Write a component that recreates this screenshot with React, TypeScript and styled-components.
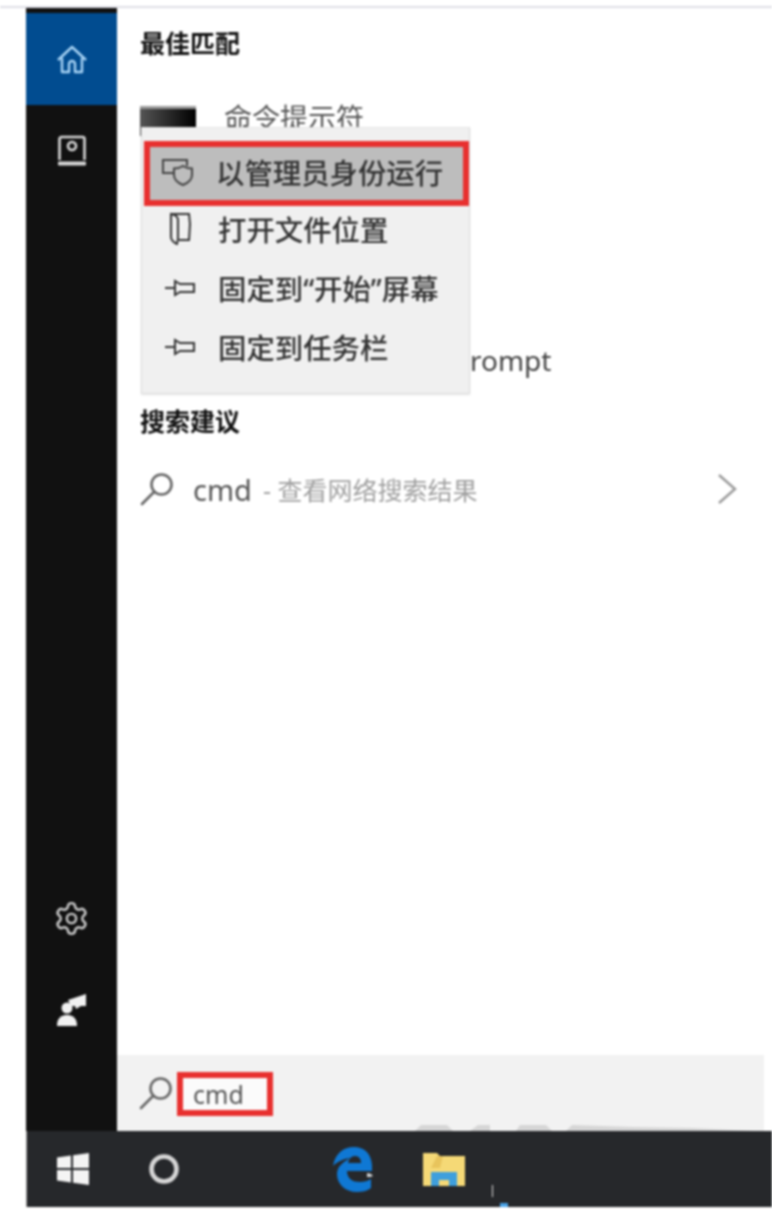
import { FC } from "react";
import styled, { createGlobalStyle } from "styled-components";
import { Settings } from "lucide-react";

const GlobalStyle = createGlobalStyle`
  html, body {
    margin: 0;
    background: #fff;
  }
  body {
    width: 772px;
    height: 1211px;
    overflow: hidden;
    font-family: "Noto Sans", "Noto Sans CJK SC", sans-serif;
  }
`;

const menuItems = [
  { label: "以管理员身份运行", icon: "admin", active: true },
  { label: "打开文件位置", icon: "file", active: false },
  { label: "固定到“开始”屏幕", icon: "pin", active: false },
  { label: "固定到任务栏", icon: "pin", active: false },
];

const SearchGlyph: FC<{ size: number }> = ({ size }) => (
  <svg width={size} height={size} viewBox="0 0 34 34" fill="none" stroke="#666" strokeWidth="2.6">
    <circle cx="21.5" cy="12.5" r="10" />
    <path d="M14 20 2 32" strokeLinecap="round" />
  </svg>
);

const MenuIcon: FC<{ kind: string }> = ({ kind }) => {
  if (kind === "admin") {
    return (
      <svg width="34" height="30" viewBox="0 0 34 30" fill="none" stroke="#444" strokeWidth="2">
        <path d="M13 16H2V3h24v6" />
        <path d="M22 9c3 2 6 2.500 9 2.500V18c0 5-4 8-9 10-5-2-9-5-9-10v-6.500c3 0 6-.5 9-2.500Z" fill="#bdbdbd" />
      </svg>
    );
  }
  if (kind === "file") {
    return (
      <svg width="24" height="33" viewBox="0 0 24 33" fill="none" stroke="#333" strokeWidth="2">
        <path d="M3 2h18l1 10-1 16H11" />
        <path d="M3 2c5 1 7 3 7 6v19l-1 5c-4-2-6-4-6-7Z" />
      </svg>
    );
  }
  return (
    <svg width="32" height="18" viewBox="0 0 32 18" fill="none" stroke="#333" strokeWidth="2">
      <path d="M1 9h10" />
      <path d="M11 2v14l5-3h14V5H16Z" />
    </svg>
  );
};

export default function App() {
  return (
    <>
      <GlobalStyle />
      <Screen>
        <TopRule />
        <StartWindow>
          <Sidebar>
            <div>
              <HomeTab>
                <svg width="32" height="32" viewBox="0 0 32 32" fill="none" stroke="#a9d4f5" strokeWidth="2.4" strokeLinejoin="round">
                  <path d="M2 16 16 3l14 13" />
                  <path d="M6 14v14h7v-8a3 3 0 0 1 6 0v8h7V14" />
                </svg>
              </HomeTab>
              <SideButton>
                <svg width="30" height="32" viewBox="0 0 30 32" fill="none" stroke="#d8d8d8" strokeWidth="2.6">
                  <path d="M2.500 25V4a2 2 0 0 1 2-2h21a2 2 0 0 1 2 2v21" />
                  <circle cx="15" cy="11" r="4" />
                  <path d="M1.500 27h27v3h-27Z" fill="#d8d8d8" strokeWidth="1" />
                </svg>
              </SideButton>
            </div>
            <div>
              <SideButton>
                <Settings size={37} color="#c9c9c9" strokeWidth={1.6} />
              </SideButton>
              <SideButton>
                <svg width="30" height="34" viewBox="0 0 30 34" fill="#f2f2f2">
                  <path d="M11 7 29 1v12h-5l-5 3-1-3h-4Z" />
                  <circle cx="10" cy="15" r="5.500" />
                  <path d="M0 33c0-7 3-11 10-11s10 4 10 11Z" />
                </svg>
              </SideButton>
            </div>
          </Sidebar>
          <Panel>
            <Results>
              <SectionTitle>最佳匹配</SectionTitle>
              <AppRow>
                <AppThumb />
                <AppName>命令提示符</AppName>
              </AppRow>
              <CutoffLabel>rompt</CutoffLabel>
              <SectionTitle $top={26}>搜索建议</SectionTitle>
              <SuggestionRow>
                <SearchGlyph size={34} />
                <SuggestionTerm>cmd</SuggestionTerm>
                <SuggestionHint>- 查看网络搜索结果</SuggestionHint>
                <Chevron width="20" height="32" viewBox="0 0 20 32" fill="none" stroke="#999" strokeWidth="2.4">
                  <path d="M2 2l16 14L2 30" />
                </Chevron>
              </SuggestionRow>
              <ContextMenu>
                {menuItems.map((item) => (
                  <MenuRow key={item.label} $active={item.active}>
                    <MenuIconSlot>
                      <MenuIcon kind={item.icon} />
                    </MenuIconSlot>
                    <MenuLabel>{item.label}</MenuLabel>
                  </MenuRow>
                ))}
              </ContextMenu>
            </Results>
            <SearchBar>
              <SearchGlyph size={34} />
              <SearchInput>cmd</SearchInput>
              <Smear width="349" height="11" viewBox="0 0 349 11" fill="#d6d6d6">
                <path d="M0 11 6 5h26l6 6Zm55 0 8-6h12v6Zm46 0 4-6h26l6 6Zm50 0 6-6 60 2 60 1 62 3Z" />
              </Smear>
            </SearchBar>
          </Panel>
        </StartWindow>
        <Taskbar>
          <TaskSlot>
            <svg width="32" height="34" viewBox="0 0 32 34" fill="#f4f4f4">
              <path d="M0 5.500 14 3.500v12.500H0ZM16 3.200 32 1v15H16ZM0 18h14v12.500L0 28.500ZM16 18h16v15l-16-2.200Z" />
            </svg>
          </TaskSlot>
          <TaskSlot>
            <svg width="32" height="32" viewBox="0 0 32 32" fill="none" stroke="#d6d6d6" strokeWidth="4.6">
              <circle cx="16" cy="16" r="12.500" />
            </svg>
          </TaskSlot>
          <TaskSlot $gap={98}>
            <svg width="42" height="46" viewBox="0 0 42 46" fill="none">
              <path d="M1 20C3 8 11 1 22 1c10 0 17 6 18 18v6H15c0 8 6 11 13 11 4 0 8-1 11-3v9c-4 3-9 4-14 4C13 46 5 38 5 28c0-3 1-5 2-7 3-4 7-7 12-9-9 1-14 4-18 8Z" fill="#0f78d4" />
              <path d="M16 17h13c0-4-2-7-6-7s-6 3-7 7Z" fill="#26282b" />
              <path d="M35 27c2 0 5 1 6 3-2 1-4 1-6 1Z" fill="#cfd3d6" />
            </svg>
          </TaskSlot>
          <TaskSlot>
            <svg width="42" height="34" viewBox="0 0 42 34">
              <path d="M0 1h14l3 3h25v30H0Z" fill="#f5d976" />
              <path d="M14 4h6l-3 12H8Z" fill="#e8c45c" />
              <path d="M8 20h26v14H8Z" fill="#3f9fdc" />
              <path d="M16 28h10v6H16Z" fill="#f5d976" />
            </svg>
          </TaskSlot>
          <TaskTick />
          <TaskArrow />
        </Taskbar>
      </Screen>
    </>
  );
}

const Screen = styled.div`
  width: 772px;
  height: 1211px;
  padding-top: 6px;
  box-sizing: border-box;
  background: #fff;
  filter: blur(0.9px);
`;
const TopRule = styled.div`
  height: 2px;
  background: #dfdfe6;
`;
const StartWindow = styled.div`
  display: grid;
  grid-template-columns: 91px 647px;
  height: 1123px;
  margin-left: 26px;
`;
const Sidebar = styled.div`
  display: flex;
  flex-direction: column;
  justify-content: space-between;
  padding: 5px 0 75px;
  background: #111;
`;
const HomeTab = styled.div`
  display: flex;
  align-items: center;
  justify-content: center;
  height: 92px;
  padding-top: 2px;
  box-sizing: border-box;
  background: #014c90;
`;
const SideButton = styled.div`
  display: flex;
  align-items: center;
  justify-content: center;
  height: 92px;
`;
const Panel = styled.div`
  display: flex;
  flex-direction: column;
  background: #fff;
`;
const Results = styled.div`
  position: relative;
  flex: 1;
  padding: 20px 0 0 23px;
`;
const SectionTitle = styled.div<{ $top?: number }>`
  margin-top: ${(p) => p.$top ?? 0}px;
  font-size: 25px;
  line-height: 30px;
  font-weight: 700;
  color: #111;
`;
const AppRow = styled.div`
  display: flex;
  align-items: flex-start;
  gap: 28px;
  height: 60px;
  margin-top: 40px;
`;
const AppThumb = styled.div`
  width: 56px;
  height: 30px;
  margin-top: 8px;
  border-top: 3px solid #999;
  box-sizing: border-box;
  background: linear-gradient(90deg, #555, #000);
`;
const AppName = styled.div`
  font-size: 28px;
  line-height: 40px;
  color: #555;
`;
const CutoffLabel = styled.div`
  margin: 182px 0 0 330px;
  font-size: 28px;
  line-height: 40px;
  color: #444;
`;
const SuggestionRow = styled.div`
  display: flex;
  align-items: center;
  height: 60px;
  margin-top: 23px;
`;
const SuggestionTerm = styled.div`
  margin-left: 19px;
  font-size: 29px;
  color: #555;
`;
const SuggestionHint = styled.div`
  margin-left: 11px;
  font-size: 25px;
  color: #a0a0a0;
`;
const Chevron = styled.svg`
  margin-left: auto;
  margin-right: 27px;
`;
const ContextMenu = styled.div`
  position: absolute;
  top: 119px;
  left: 24px;
  width: 329px;
  height: 267px;
  box-sizing: border-box;
  padding-top: 13px;
  background: #f0f0f0;
  border: 1px solid #dcdcdc;
  border-top-color: #e6e6e6;
  box-shadow: 0 1px 2px rgba(0, 0, 0, 0.1);
`;
const MenuRow = styled.div<{ $active: boolean }>`
  display: flex;
  align-items: center;
  height: ${(p) => (p.$active ? 65 : 59)}px;
  margin-bottom: ${(p) => (p.$active ? -7 : 0)}px;
  box-sizing: border-box;
  border: ${(p) => (p.$active ? "6px solid #e8302f" : "0 solid transparent")};
  background: ${(p) => (p.$active ? "#bdbdbd" : "transparent")};
  margin-left: ${(p) => (p.$active ? 2 : 7)}px;
  padding-left: ${(p) => (p.$active ? 11 : 14)}px;
  padding-bottom: ${(p) => (p.$active ? 4 : 0)}px;
`;
const MenuIconSlot = styled.div`
  display: flex;
  align-items: center;
  justify-content: center;
  width: 34px;
  margin-right: 21px;
`;
const MenuLabel = styled.div`
  font-family: "Noto Sans", "Noto Sans CJK SC", sans-serif;
  font-size: 28.400px;
  font-weight: 500;
  color: #333;
  white-space: nowrap;
`;
const SearchBar = styled.div`
  position: relative;
  display: flex;
  align-items: center;
  gap: 4px;
  height: 76px;
  padding: 0 0 0 22px;
  box-sizing: border-box;
  background: #f2f2f2;
`;
const SearchInput = styled.div`
  display: flex;
  align-items: center;
  width: 96px;
  height: 44px;
  margin-top: 1px;
  padding-left: 10px;
  box-sizing: border-box;
  border: 6px solid #e8302f;
  background: #fbfbfb;
  font-size: 25px;
  color: #555;
`;
const Smear = styled.svg`
  position: absolute;
  right: 0;
  bottom: 0;
`;
const Taskbar = styled.div`
  position: relative;
  display: flex;
  align-items: center;
  width: 746px;
  height: 76px;
  margin-left: 26px;
  background: #26282b;
  border-left: 1px solid #999;
  box-sizing: border-box;
`;
const TaskSlot = styled.div<{ $gap?: number }>`
  display: flex;
  align-items: center;
  justify-content: center;
  width: 91px;
  margin-left: ${(p) => p.$gap ?? 0}px;
`;
const TaskTick = styled.div`
  position: absolute;
  left: 465px;
  top: 54px;
  width: 1px;
  height: 12px;
  background: #ddd;
`;
const TaskArrow = styled.div`
  position: absolute;
  left: 473px;
  bottom: 0;
  width: 8px;
  height: 4px;
  background: #4aa3e8;
`;
